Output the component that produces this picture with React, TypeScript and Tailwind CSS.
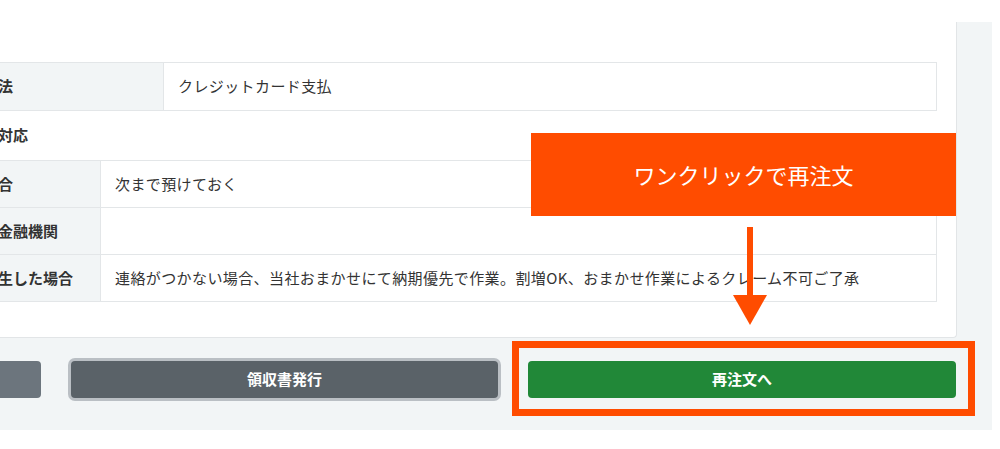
import React from "react";

const font = { fontFamily: "'Noto Sans CJK JP', 'Noto Sans', sans-serif" };

function Row({ label, value, labelW, h, last }: { label: string; value: string; labelW: string; h: string; last?: boolean }) {
  return (
    <div className={`flex ${h} ${last ? "" : "border-b border-[#e3e6e8]"}`}>
      <div className={`${labelW} shrink-0 bg-[#f2f5f6] border-r border-[#e3e6e8] flex items-center pl-[13px] font-bold text-[15px] text-[#333] whitespace-nowrap overflow-hidden`}>
        {label}
      </div>
      <div className="flex-1 flex items-center pl-[14px] text-[15px] tracking-[0.4px] text-[#333] whitespace-nowrap">{value}</div>
    </div>
  );
}

export default function App() {
  return (
    <div className="relative w-[1000px] h-[449px] bg-white overflow-hidden" style={font}>
      <div className="mt-[22px] w-[992px] bg-[#f2f5f6] flex flex-col">
        <div className="-ml-[106px] w-[1063px] bg-white border-r border-b border-[#e2e5e7] rounded-br-[4px] pt-[40px] pb-[35px] pr-[19px]">
          <div className="border border-[#e3e6e8]">
            <Row label="お支払いの方法" value="クレジットカード支払" labelW="w-[269px]" h="h-[47px]" last />
          </div>
          <div className="h-[49px] flex items-center pl-[14px] font-bold text-[15px] text-[#333] whitespace-nowrap">
            トラブル時の対応
          </div>
          <div className="border border-[#e3e6e8]">
            <Row label="過剰入金の場合" value="次まで預けておく" labelW="w-[206px]" h="h-[47px]" />
            <Row label="返金先の指定金融機関" value="" labelW="w-[206px]" h="h-[47px]" />
            <Row
              label="トラブルが発生した場合"
              value="連絡がつかない場合、当社おまかせにて納期優先で作業。割増OK、おまかせ作業によるクレーム不可ご了承"
              labelW="w-[206px]"
              h="h-[46px]"
              last
            />
          </div>
        </div>
        <div className="flex -ml-[386px] gap-[30px] pt-[23px] pb-[32px]">
          <button className="w-[427px] h-[37px] shrink-0 rounded-[4px] bg-[#6c757d] text-white text-[15px] font-bold">
            戻る
          </button>
          <button className="w-[427px] h-[37px] shrink-0 rounded-[4px] bg-[#5a6268] text-white text-[15px] font-bold shadow-[0_0_0_3px_rgba(130,138,145,0.5)]">
            領収書発行
          </button>
          <button className="w-[428px] h-[37px] shrink-0 rounded-[4px] bg-[#218838] text-white text-[15px] font-bold">
            再注文へ
          </button>
        </div>
      </div>

      <div className="absolute left-[531px] top-[133px] w-[425px] h-[83px] bg-[#ff4c00] flex items-center justify-center text-white text-[22px] font-normal">
        ワンクリックで再注文
      </div>
      <svg className="absolute left-[733px] top-[227px]" width="34" height="98" viewBox="0 0 34 98">
        <rect x="14" y="0" width="6" height="70" fill="#ff4c00" />
        <polygon points="0,68 34,68 17,98" fill="#ff4c00" />
      </svg>
      <div className="absolute left-[512px] top-[341px] w-[463px] h-[75px] border-[7px] border-[#ff4c00]" />
    </div>
  );
}
